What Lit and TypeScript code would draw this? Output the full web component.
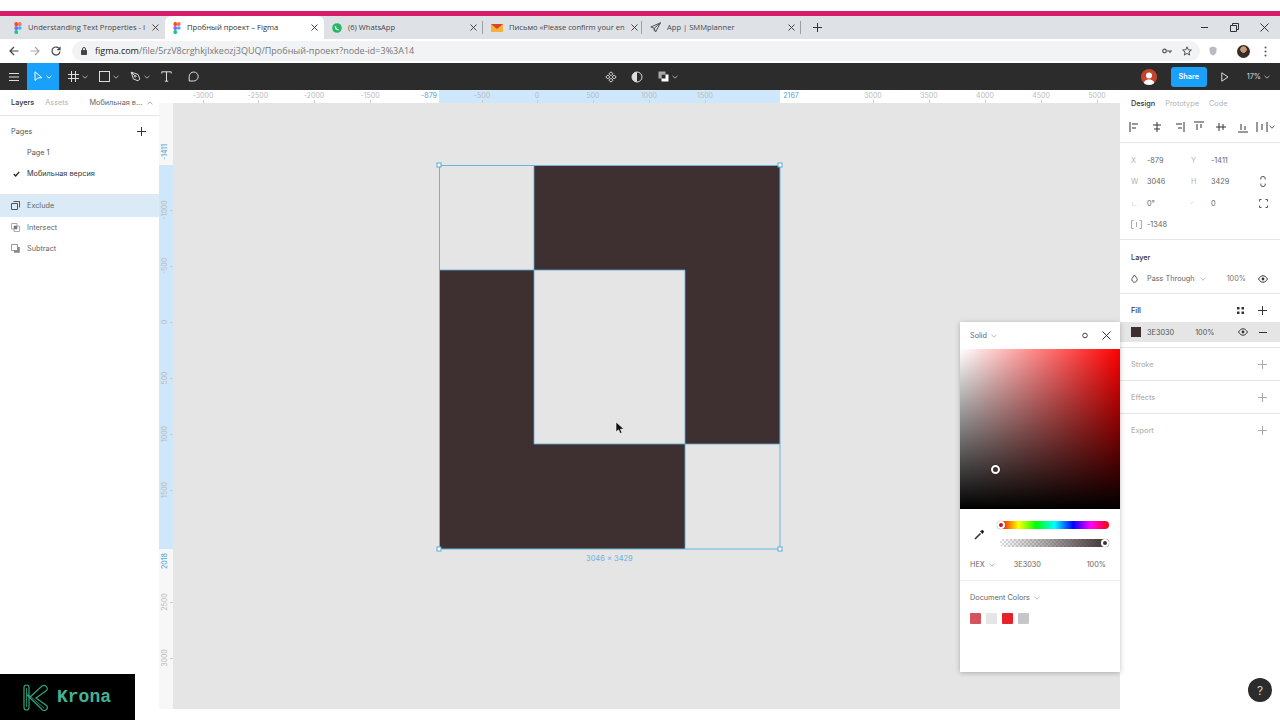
import { LitElement, html, css, svg } from "lit";
import { customElement } from "lit/decorators.js";

const hTicks = [
  [203, "-3000"], [258, "-2500"], [314, "-2000"], [370, "-1500"], [429, "-879", 1],
  [482, "-500"], [537, "0"], [593, "500"], [649, "1000"], [705, "1500"], [791, "2167", 1],
  [873, "3000"], [929, "3500"], [985, "4000"], [1041, "4500"], [1097, "5000"],
] as [number, string, number?][];

const vTicks = [
  [152, "-1411", 1], [210, "-1000"], [266, "-500"], [322, "0"], [378, "500"],
  [434, "1000"], [490, "1500"], [561, "2018", 1], [602, "2500"], [658, "3000"],
] as [number, string, number?][];

const ico = (w: number, h: number, body: unknown, stroke = "#333") => html`<svg
  width=${w} height=${h} viewBox="0 0 ${w} ${h}" fill="none" stroke=${stroke} stroke-width="1">${body}</svg>`;

const figmaFav = ico(8, 12, svg`
  <rect x="0.5" y="0" width="3.5" height="4" rx="1.5" fill="#f24e1e" stroke="none"/>
  <rect x="4" y="0" width="3.5" height="4" rx="1.5" fill="#ff7262" stroke="none"/>
  <rect x="0.5" y="4" width="3.5" height="4" rx="1.5" fill="#a259ff" stroke="none"/>
  <circle cx="5.8" cy="6" r="1.8" fill="#1abcfe" stroke="none"/>
  <rect x="0.5" y="8" width="3.5" height="4" rx="1.5" fill="#0acf83" stroke="none"/>`);
const whatsFav = ico(10, 10, svg`
  <circle cx="5" cy="5" r="4.8" fill="#25b864" stroke="none"/>
  <path d="M3.4 3.2c0 2 1.4 3.4 3.3 3.6" stroke="#fff" stroke-width="1.3"/>`);
const mailFav = ico(12, 10, svg`
  <path d="M0 1h12v8H0z" fill="#f4b13e" stroke="none"/>
  <path d="M0 1h12L6 6z" fill="#d8442e" stroke="none"/>`);
const planeFav = ico(11, 11, svg`
  <path d="M10.5 .8 .8 5l3.4 1.3L5.6 10z" stroke="#555"/><path d="M10.5 .8 4.2 6.3V9" stroke="#555"/>`);
const closeX = ico(7, 7, svg`<path d="M.5.5l6 6M6.5.5l-6 6" stroke="#444"/>`);
const chev = (c = "#999") => ico(6, 4, svg`<path d="M.5.8 3 3.2 5.5.8" stroke=${c}/>`);
const plus = (c = "#333") => ico(9, 9, svg`<path d="M4.5 0v9M0 4.5h9" stroke=${c}/>`);

const tabs = [
  { fav: figmaFav, text: "Understanding Text Properties - I" },
  { fav: figmaFav, text: "Пробный проект – Figma", active: true },
  { fav: whatsFav, text: "(6) WhatsApp" },
  { fav: mailFav, text: "Письмо «Please confirm your en" },
  { fav: planeFav, text: "App | SMMplanner" },
];

const alignIcons = [
  svg`<path d="M1 1v10M3 3h6M3 7h4"/>`,
  svg`<path d="M6 1v10M2 4h8M3 8h6"/>`,
  svg`<path d="M11 1v10M3 3h6M5 7h4"/>`,
  svg`<path d="M1 1h10M4 3v6M8 3v4"/>`,
  svg`<path d="M1 6h10M4 2v8M8 3v6"/>`,
  svg`<path d="M1 11h10M4 3v6M8 5v4"/>`,
  svg`<path d="M1 1v10M11 1v10M6 3v6"/>`,
];

const eye = ico(10, 8, svg`<path d="M.5 4C2 1.6 3.4.8 5 .8S8 1.6 9.5 4C8 6.4 6.600 7.200 5 7.200S2 6.400.5 4z"/><circle cx="5" cy="4" r="1.400" fill="#333" stroke="none"/>`);

@customElement("app-root")
export class AppRoot extends LitElement {
  static styles = css`
    :host {
      display: block;
      width: 1280px;
      height: 720px;
      position: relative;
      overflow: hidden;
      background: #fff;
      font-family: Inter, "Liberation Sans", sans-serif;
      font-size: 7.3px;
      color: #333;
    }
    svg { display: block; flex: none; }
    .blank { height: 11px; }
    .pink { height: 5px; background: #d81b6a; }

    .tabs { height: 23px; background: #dee1e6; display: flex; align-items: stretch; padding-left: 6px; font-family: "Open Sans", "Noto Sans", sans-serif; font-size: 7.6px; color: #45474a; }
    .tab { width: 159px; box-sizing: border-box; padding: 0 6px 0 8px; display: flex; align-items: center; gap: 6px; }
    .tab.active { background: #fff; border-radius: 6px 6px 0 0; color: #333; }
    .tab .name { flex: 1; white-space: nowrap; padding-bottom: 2px; }
    .sep { width: 1px; height: 13px; background: #9aa0a6; align-self: center; margin-left: -1px; }
    .newtab { margin: 0 0 0 12px; align-self: center; }
    .winctl { margin-left: auto; display: flex; align-items: center; gap: 21px; padding-right: 11px; }

    .addr { height: 24px; display: flex; align-items: center; padding-left: 9px; background: #fff; font-family: "Open Sans", "Noto Sans", sans-serif; }
    .nav { display: flex; gap: 11px; align-items: center; width: 63px; }
    .pill { width: 1128px; height: 20px; background: #f1f3f4; border-radius: 10px; display: flex; align-items: center; padding: 0 8px 0 9px; box-sizing: border-box; gap: 8px; font-size: 9px; color: #777; }
    .pill b { font-weight: 400; color: #222; }
    .pill .url { flex: 1; padding-bottom: 2px; }
    .pill .end { display: flex; gap: 10px; align-items: center; }
    .addr .tail { display: flex; align-items: center; margin-left: 9px; }
    .addr .avatar { width: 13px; height: 13px; border-radius: 50%; background: radial-gradient(circle at 50% 35%, #c49a7a 0 28%, #3a2a24 32%); margin: 0 14px 0 20px; }

    .toolbar { height: 27px; background: #2c2c2c; display: flex; align-items: center; color: #ddd; }
    .burger { width: 27px; display: flex; justify-content: center; }
    .move { width: 32px; height: 27px; background: #18a0fb; display: flex; align-items: center; justify-content: center; gap: 3px; }
    .tool { width: 31px; box-sizing: border-box; padding-left: 9px; display: flex; align-items: center; gap: 3px; }
    .tool.comment { padding-left: 5px; }
    .center { position: absolute; left: 605px; display: flex; align-items: center; gap: 14px; }
    .center .shift { margin-left: 1px; display: flex; align-items: center; gap: 3px; }
    .tright { margin-left: auto; display: flex; align-items: center; }
    .me { width: 16px; height: 16px; border-radius: 50%; background: #c8432c; overflow: hidden; margin-right: 14px; }
    .share { width: 36px; height: 20px; border-radius: 3px; background: #18a0fb; color: #fff; font-weight: 600; display: flex; align-items: center; justify-content: center; }
    .play { margin: 0 18px 0 14px; }
    .zoomv { display: flex; align-items: center; gap: 3px; margin: 0 10px 0 0; color: #ddd; }

    .main { display: flex; height: 630px; }
    .left { width: 159px; flex: none; background: #fff; display: flex; flex-direction: column; }
    .ptabs { height: 26px; flex: none; display: flex; align-items: center; padding-left: 11px; border-bottom: 1px solid #e5e5e5; box-sizing: border-box; color: #b3b3b3; white-space: nowrap; }
    .ptabs .on { color: #333; font-weight: 500; }
    .left .ptabs span:nth-child(2) { margin-left: 11px; }
    .left .ptabs span:nth-child(3) { margin-left: 21px; color: #666; }
    .left .ptabs svg { margin-left: 5px; transform: rotate(180deg); }
    .pages { height: 79px; flex: none; box-sizing: border-box; border-bottom: 1px solid #e5e5e5; color: #555; padding-top: 4px; }
    .pages .head { height: 22px; display: flex; align-items: center; justify-content: space-between; padding: 0 13px 0 11px; }
    .pages .row { height: 21px; display: flex; align-items: center; padding-left: 27px; position: relative; }
    .pages .row.cur { color: #333; }
    .pages .check { position: absolute; left: 13px; }
    .layer { height: 21.5px; display: flex; align-items: center; gap: 7px; padding-left: 11px; color: #666; }
    .layer.sel { background: #daebf7; }

    .center-col { flex: 1; display: flex; flex-direction: column; min-width: 0; }
    .hruler { height: 13px; flex: none; position: relative; background: #fff; color: #bbb; font-size: 7px; }
    .hruler .hl { position: absolute; left: 280px; width: 341px; top: 0; bottom: 0; background: #cfe7fb; }
    .hlabel { position: absolute; top: 1px; transform: translateX(-50%); line-height: 9px; }
    .hlabel.em, .vlabel.em { color: #4fa3d8; }
    .htick { position: absolute; bottom: 0; width: 1px; height: 3px; background: #ccc; }
    .body { flex: 1; display: flex; min-height: 0; }
    .vruler { width: 14px; flex: none; height: 606px; position: relative; background: #f7f7f7; color: #bbb; font-size: 7px; }
    .vruler .hl { position: absolute; left: 0; right: 0; top: 62px; height: 384px; background: #cfe7fb; }
    .vlabel { position: absolute; left: 5px; transform: translate(-50%, -50%) rotate(-90deg); white-space: nowrap; line-height: 9px; }
    .vtick { position: absolute; right: 0; width: 3px; height: 1px; background: #ccc; }
    .canvas { flex: 1; height: 606px; background: #e5e5e5; position: relative; }
    .shape { position: absolute; left: 266px; top: 62px; overflow: visible; }
    .dims { position: absolute; left: 413px; top: 451px; color: #6eb1de; font-size: 7.5px; }
    .cursor { position: absolute; left: 442px; top: 318px; }

    .right { width: 160px; flex: none; background: #fff; display: flex; flex-direction: column; color: #555; }
    .right .ptabs { border: 0; gap: 10px; }
    .aligns { height: 27px; flex: none; border-bottom: 1px solid #e5e5e5; box-sizing: border-box; display: flex; align-items: center; padding: 0 0 5px 9px; gap: 10px; }
    .aligns svg:nth-child(4) { margin-left: -2px; }
    .aligns .last { display: flex; align-items: center; gap: 1px; margin-left: -3px; }
    .props { height: 97px; flex: none; border-bottom: 1px solid #e5e5e5; box-sizing: border-box; padding-top: 6.5px; display: grid; grid-template-columns: 16px 44px 20px 47px 10px; grid-auto-rows: 21.5px; align-items: center; padding-left: 11px; color: #666; }
    .props .k { color: #b3b3b3; }
    .props .icon { display: flex; justify-content: center; }
    .sec { flex: none; box-sizing: border-box; border-bottom: 1px solid #e5e5e5; display: flex; align-items: center; justify-content: space-between; padding: 0 13px 0 11px; height: 33px; color: #b3b3b3; font-weight: 500; }
    .layerhead { height: 54px; border-bottom: 1px solid #e5e5e5; box-sizing: border-box; flex: none; padding: 0 12px 0 11px; }
    .lt { height: 34px; display: flex; align-items: center; color: #333; font-weight: 500; box-sizing: border-box; }
    .lr { display: flex; align-items: center; color: #666; }
    .lr .pct { margin-left: auto; margin-right: 12px; color: #777; }
    .fillwrap { height: 54px; flex: none; border-bottom: 1px solid #e5e5e5; box-sizing: border-box; }
    .fillhead { height: 28px; box-sizing: border-box; padding: 4px 13px 0 11px; display: flex; align-items: center; color: #333; font-weight: 500; justify-content: space-between; }
    .fillhead .acts { display: flex; gap: 14px; align-items: center; }
    .fillrow { height: 20px; background: #e5e5e5; display: flex; align-items: center; padding: 0 13px 0 11px; color: #555; }
    .chip { width: 10px; height: 10px; background: #3e3030; margin-right: 6px; }
    .fillrow .pc { margin-left: 21px; }
    .fillrow .rt { margin-left: auto; display: flex; gap: 11px; align-items: center; }

    .picker { position: absolute; left: 960px; top: 322px; width: 160px; height: 350px; background: #fff; box-shadow: 0 1px 5px rgba(0,0,0,.25); display: flex; flex-direction: column; color: #666; }
    .phead { height: 27px; flex: none; display: flex; align-items: center; padding: 0 9px 0 10px; }
    .phead .sp { flex: 1; }
    .phead > svg:first-of-type { margin-left: 4px; }
    .phead .ring { margin-right: 14px; }
    .grad { height: 160px; flex: none; position: relative; background: linear-gradient(to top, #000, transparent), linear-gradient(to right, #fff, #f00); }
    .knob { position: absolute; left: 31px; top: 116px; width: 5px; height: 5px; border: 2px solid #fff; border-radius: 50%; background: #3e3030; box-shadow: 0 0 1px #000; }
    .sliders { height: 50px; flex: none; display: flex; align-items: center; padding-left: 14px; gap: 15px; }
    .bars { display: flex; flex-direction: column; gap: 10px; width: 109px; }
    .bar { height: 8px; border-radius: 4px; position: relative; }
    .hue { background: linear-gradient(to right, #f00, #ff0 17%, #0f0 33%, #0ff 50%, #00f 67%, #f0f 83%, #f00); }
    .alpha { background: linear-gradient(to right, rgba(62,48,48,0), #3e3030), repeating-conic-gradient(#ddd 0 25%, #fff 0 50%) 0 0 / 4px 4px; }
    .dot { position: absolute; top: 0; width: 4px; height: 4px; border: 2px solid #fff; border-radius: 50%; box-shadow: 0 0 1px #555; }
    .dot.h { left: -3px; background: #c4142c; }
    .dot.a { right: 0; background: #3e3030; }
    .hexrow { height: 11px; flex: none; display: flex; align-items: center; padding: 0 14px 0 10px; }
    .hexrow svg { margin-left: 4px; }
    .hexrow .hexv { margin-left: 19px; }
    .hexrow .al { margin-left: auto; }
    .docs { margin-top: 10px; border-top: 1px solid #f0f0f0; padding: 11px 10px 0; }
    .docs .t { display: flex; align-items: center; gap: 4px; height: 11px; }
    .swatches { display: flex; gap: 5px; margin-top: 10px; }
    .swatches i { display: block; width: 11px; height: 11px; border-radius: 1px; }

    .krona { position: absolute; left: 0; top: 674px; width: 135px; height: 46px; background: #000; display: flex; align-items: center; padding-left: 23px; box-sizing: border-box; gap: 7px; color: #44b393; font: 700 18px "Liberation Mono", monospace; }
    .help { position: absolute; left: 1248px; top: 678px; width: 24px; height: 24px; border-radius: 50%; background: #2c2c2c; color: #ccc; font-size: 12px; display: flex; align-items: center; justify-content: center; }
  `;

  renderTabs() {
    return html`<div class="tabs">
      ${tabs.map((t, i) => html`
        <div class="tab ${t.active ? "active" : ""}">${t.fav}<span class="name">${t.text}</span>${closeX}</div>
        ${i >= 2 ? html`<div class="sep"></div>` : ""}`)}
      <div class="newtab">${plus("#333")}</div>
      <div class="winctl">
        ${ico(9, 9, svg`<path d="M1 4.500h7"/>`)}
        ${ico(9, 9, svg`<path d="M.5 2.500h6v6h-6zM2.500 2.500v-2h6v6h-2"/>`)}
        ${ico(9, 9, svg`<path d="M.5.5l8 8M8.500.5l-8 8"/>`)}
      </div>
    </div>`;
  }

  renderAddr() {
    return html`<div class="addr">
      <div class="nav">
        ${ico(10, 10, svg`<path d="M9.500 5H1M5 1 1 5l4 4" stroke="#444" stroke-width="1.200"/>`)}
        ${ico(10, 10, svg`<path d="M.5 5H9M5 1l4 4-4 4" stroke="#aaa" stroke-width="1.200"/>`)}
        ${ico(10, 10, svg`<path d="M8.600 3.200A4 4 0 1 0 9 5.500M9 .8v2.800H6.200" stroke="#444" stroke-width="1.200"/>`)}
      </div>
      <div class="pill">
        ${ico(6, 8, svg`<path d="M.5 3.500h5v4h-5z" fill="#444" stroke="#444"/><path d="M1.500 3.500V2a1.500 1.500 0 0 1 3 0v1.500" stroke="#444"/>`)}
        <span class="url"><b>figma.com</b>/file/5rzV8crghkjlxkeozj3QUQ/Пробный-проект?node-id=3%3A14</span>
        <span class="end">
          ${ico(10, 6, svg`<circle cx="2.500" cy="3" r="1.800" stroke="#555" stroke-width="1.200"/><path d="M4.500 3H10M8 3v2" stroke="#555" stroke-width="1.200"/>`)}
          ${ico(10, 10, svg`<path d="M5 .8 6.200 3.800l3.200.2-2.500 2 .8 3.100L5 7.400 2.300 9.100l.8-3.100-2.500-2 3.200-.2z" stroke="#555"/>`)}
        </span>
      </div>
      <div class="tail">
        ${ico(8, 10, svg`<path d="M4 .5 7.500 1.800V5C7.500 7.500 5.500 9 4 9.500 2.500 9 .5 7.500.5 5V1.800z" fill="#b8bcc0" stroke="none"/>`)}
        <div class="avatar"></div>
        ${ico(3, 11, svg`<circle cx="1.500" cy="1.500" r="1" fill="#555" stroke="none"/><circle cx="1.500" cy="5.500" r="1" fill="#555" stroke="none"/><circle cx="1.500" cy="9.500" r="1" fill="#555" stroke="none"/>`)}
      </div>
    </div>`;
  }

  renderToolbar() {
    const c = "#ddd";
    const chevD = chev("#aaa");
    return html`<div class="toolbar">
      <div class="burger">${ico(10, 8, svg`<path d="M0 .5h10M0 4h10M0 7.500h10" stroke=${c}/>`)}</div>
      <div class="move">
        ${ico(9, 11, svg`<path d="M1 .8v8.700l2.600-2.400 4.200-.4z" stroke="#fff"/>`)}
        ${chev("#e8f4ff")}
      </div>
      <div class="tool">${ico(11, 11, svg`<path d="M3.500 0v11M7.500 0v11M0 3.500h11M0 7.500h11" stroke=${c}/>`)}${chevD}</div>
      <div class="tool">${ico(11, 11, svg`<rect x=".5" y=".5" width="10" height="10" stroke=${c}/>`)}${chevD}</div>
      <div class="tool">${ico(11, 11, svg`<path d="M1.200 1.200 8 3.400 9.800 8 8 9.800 3.400 8zM1.200 1.200l3.500 3.500" stroke=${c}/><circle cx="5.300" cy="5.300" r=".9" stroke=${c}/>`)}${chevD}</div>
      <div class="tool">${ico(11, 11, svg`<path d="M.8 2.500V.8h9.400v1.700M5.500.8v9.400M3.800 10.200h3.400" stroke=${c}/>`)}</div>
      <div class="tool comment">${ico(11, 11, svg`<path d="M1.200 10V5.500a4.500 4.500 0 1 1 4.300 4.500z" stroke=${c}/>`)}</div>
      <div class="center">
        ${ico(12, 12, svg`<path d="M6 .8 8 2.800 6 4.800 4 2.800zM6 7.200l2 2-2 2-2-2zM2.800 4 4.800 6l-2 2-2-2zM9.200 4l2 2-2 2-2-2z" stroke=${c}/>`)}
        ${ico(12, 12, svg`<circle cx="6" cy="6" r="5" stroke=${c}/><path d="M6 1a5 5 0 0 0 0 10z" fill=${c} stroke="none"/>`)}
        <span class="shift">
          ${ico(11, 11, svg`<path d="M.5.5h7v7h-7z" fill="#aaa" stroke="none"/><path d="M3.500 3.500h7v7h-7z" fill="#fff" stroke="none"/><path d="M3.500 3.500h4v4h-4z" fill="#2c2c2c" stroke="none"/>`)}
          ${chevD}
        </span>
      </div>
      <div class="tright">
        <div class="me">${ico(16, 16, svg`<circle cx="8" cy="6.500" r="3" fill="#fff" stroke="none"/><path d="M2.500 16c0-4 2.500-5.500 5.500-5.500s5.500 1.500 5.500 5.500z" fill="#fff" stroke="none"/>`)}</div>
        <div class="share">Share</div>
        <div class="play">${ico(8, 10, svg`<path d="M.8.8 7 5 .8 9.200z" stroke=${c}/>`)}</div>
        <div class="zoomv">17% ${chevD}</div>
      </div>
    </div>`;
  }

  renderLeft() {
    return html`<div class="left">
      <div class="ptabs"><span class="on">Layers</span><span>Assets</span><span>Мобильная в...</span>${chev("#aaa")}</div>
      <div class="pages">
        <div class="head"><span>Pages</span>${plus()}</div>
        <div class="row">Page 1</div>
        <div class="row cur">
          <span class="check">${ico(7, 6, svg`<path d="M.8 3 2.700 5 6.200.8" stroke="#222" stroke-width="1.300"/>`)}</span>Мобильная версия
        </div>
      </div>
      <div class="layer sel">${ico(9, 9, svg`<path d="M2.500.5h6v6M.5 2.500h6v6h-6z" stroke="#555"/>`)}Exclude</div>
      <div class="layer">${ico(9, 9, svg`<path d="M.5.5h5.500v5.500H.5z" stroke="#aaa"/><path d="M3 3h5.500v5.500H3z" stroke="#aaa"/><path d="M3 3h3v3H3z" fill="#777" stroke="none"/>`)}Intersect</div>
      <div class="layer">${ico(9, 9, svg`<path d="M.5.5h6v6h-6z" stroke="#999"/><path d="M6.500 3h2.300v5.800H3V6.500h3.500z" fill="#888" stroke="none"/>`)}Subtract</div>
    </div>`;
  }

  renderCanvas() {
    const lines = "M95 0V105M95 105H0M95 105H246V279M95 105V279H246M246 279H341M246 279V384";
    return html`<div class="center-col">
      <div class="hruler">
        <div class="hl"></div>
        ${hTicks.map(([x, t, em]) => html`
          <span class="hlabel ${em ? "em" : ""}" style="left:${x - 159}px">${t}</span>
          ${em ? "" : html`<i class="htick" style="left:${x - 159}px"></i>`}`)}
      </div>
      <div class="body">
        <div class="vruler">
          <div class="hl"></div>
          ${vTicks.map(([y, t, em]) => html`
            <span class="vlabel ${em ? "em" : ""}" style="top:${y - 103}px">${t}</span>
            ${em ? "" : html`<i class="vtick" style="top:${y - 103}px"></i>`}`)}
        </div>
        <div class="canvas">
          <svg class="shape" width="341" height="384" viewBox="0 0 341 384">
            <path d="M95 0H341V279H246V105H95V279H246V384H0V105H95z" fill="#3e3030"/>
            <path d=${lines} fill="none" stroke="#5aa9d6" stroke-width="1" opacity=".8"/>
            <rect x=".5" y=".5" width="340.500" height="383.500" fill="none" stroke="#66b6dd"/>
            ${[[0, 0], [341, 0], [0, 384], [341, 384]].map(([x, y]) => svg`
              <rect x=${x - 2} y=${y - 2} width="4" height="4" fill="#fff" stroke="#5aa9d6"/>`)}
          </svg>
          <span class="dims">3046 × 3429</span>
          <svg class="cursor" width="10" height="14" viewBox="0 0 10 14">
            <path d="M1 1v10l2.500-2.300L5.200 12.500l1.800-.8L5.400 8.200 8.800 8z" fill="#111" stroke="#fff" stroke-width=".6"/>
          </svg>
        </div>
      </div>
    </div>`;
  }

  renderRight() {
    return html`<div class="right">
      <div class="ptabs"><span class="on">Design</span><span>Prototype</span><span>Code</span></div>
      <div class="aligns">
        ${alignIcons.slice(0, 6).map((p) => ico(12, 12, p))}
        <span class="last">${ico(12, 12, alignIcons[6])}${chev("#555")}</span>
      </div>
      <div class="props">
        <span class="k">X</span><span>-879</span><span class="k">Y</span><span>-1411</span><span></span>
        <span class="k">W</span><span>3046</span><span class="k">H</span><span>3429</span>
        <span class="icon">${ico(6, 11, svg`<path d="M.8 3.500V2a2.200 1.500 0 0 1 4.400 0v1.500M.8 7.500V9a2.200 1.500 0 0 0 4.400 0V7.500" stroke="#555"/>`)}</span>
        <span class="k">∟</span><span>0°</span><span class="k">◜</span><span>0</span>
        <span class="icon">${ico(9, 9, svg`<path d="M.5 2.500v-2h2M6.500.5h2v2M8.500 6.500v2h-2M2.500 8.500h-2v-2" stroke="#555"/>`)}</span>
        <span class="k">${ico(11, 9, svg`<path d="M2.500.5H.5v8h2M8.500.5h2v8h-2M5.500 2v5" stroke="#aaa"/>`)}</span><span>-1348</span>
      </div>
      <div class="layerhead">
        <div class="lt">Layer</div>
        <div class="lr">
          ${ico(7, 9, svg`<path d="M3.500 1 6 4.500a2.700 2.700 0 1 1-5 0z" stroke="#555"/>`)}
          <span style="margin-left:9px">Pass Through</span>
          <span style="margin-left:5px">${chev("#bbb")}</span>
          <span class="pct">100%</span>${eye}
        </div>
      </div>
      <div class="fillwrap">
        <div class="fillhead">
          <span>Fill</span>
          <span class="acts">
            ${ico(7, 7, svg`<path d="M0 0h2.500v2.500H0zM4.500 0H7v2.500H4.500zM0 4.500h2.500V7H0zM4.500 4.500H7V7H4.500z" fill="#333" stroke="none"/>`)}
            ${plus()}
          </span>
        </div>
        <div class="fillrow">
          <span class="chip"></span>3E3030<span class="pc">100%</span>
          <span class="rt">${eye}${ico(8, 9, svg`<path d="M0 4.500h8" stroke="#333"/>`)}</span>
        </div>
      </div>
      <div class="sec">Stroke ${plus("#aaa")}</div>
      <div class="sec">Effects ${plus("#aaa")}</div>
      <div class="sec" style="border:0">Export ${plus("#aaa")}</div>
    </div>`;
  }

  renderPicker() {
    const colors = ["#d4545e", "#e5e5e8", "#e8222b", "#c4c6ca"];
    return html`<div class="picker">
      <div class="phead">
        Solid ${chev("#bbb")}<span class="sp"></span>
        <span class="ring">${ico(6, 7, svg`<circle cx="3" cy="3.500" r="2.300" stroke="#444"/>`)}</span>
        ${ico(9, 9, svg`<path d="M.5.5l8 8M8.500.5l-8 8" stroke="#333"/>`)}
      </div>
      <div class="grad"><div class="knob"></div></div>
      <div class="sliders">
        ${ico(11, 11, svg`<path d="M1 10 6.500 4.500" stroke="#333" stroke-width="1.600"/><path d="M6 2.500 8.500.8 10.200 2.500 8.500 5z" fill="#222" stroke="none"/>`)}
        <div class="bars">
          <div class="bar hue"><span class="dot h"></span></div>
          <div class="bar alpha"><span class="dot a"></span></div>
        </div>
      </div>
      <div class="hexrow">HEX ${chev("#aaa")}<span class="hexv">3E3030</span><span class="al">100%</span></div>
      <div class="docs">
        <div class="t">Document Colors ${chev("#bbb")}</div>
        <div class="swatches">${colors.map((c) => html`<i style="background:${c}"></i>`)}</div>
      </div>
    </div>`;
  }

  render() {
    return html`
      <div class="blank"></div>
      <div class="pink"></div>
      ${this.renderTabs()}
      ${this.renderAddr()}
      ${this.renderToolbar()}
      <div class="main">
        ${this.renderLeft()}
        ${this.renderCanvas()}
        ${this.renderRight()}
      </div>
      ${this.renderPicker()}
      <div class="krona">
        <svg width="27" height="27" viewBox="0 0 27 27" fill="none" stroke="#2fa57f" stroke-width="1.200">
          <path d="M1 3.500a2.500 2.500 0 0 1 5 0v20a2.500 2.500 0 0 1-5 0zM6 14 19 2c3-2 7 2 4.500 4.500L13 14l10.500 7.500c2.500 2.500-1 6.500-4 4.500L4 11"/>
          <path d="M3.500 4v19M3.500 9 21 24" stroke-width=".8"/>
        </svg>
        <span>Krona</span>
      </div>
      <div class="help">?</div>
    `;
  }
}
